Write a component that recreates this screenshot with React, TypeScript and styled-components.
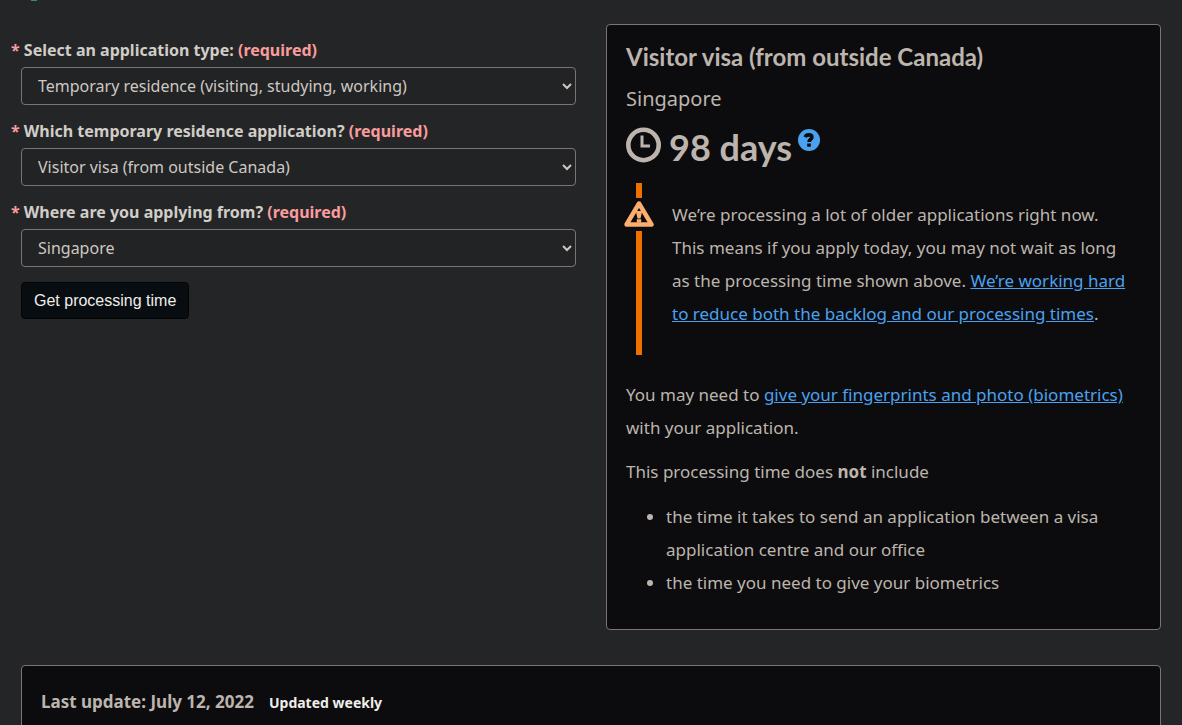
import React from "react";
import styled, { createGlobalStyle } from "styled-components";

const GlobalStyle = createGlobalStyle`
  * { box-sizing: border-box; }
  html { background: #242527; }
  body {
    margin: 0;
    background: #242527;
    color: #bdb5ad;
    font-family: "Noto Sans", sans-serif;
    font-size: 17px;
    line-height: 33px;
  }
`;

const Page = styled.div`
  padding: 0 21px;
  overflow: hidden;
`;

const TopMark = styled.div`
  width: 6px;
  height: 1px;
  margin-left: 10px;
  background: #3d8090;
`;

const Columns = styled.div`
  display: grid;
  grid-template-columns: minmax(0, 1fr) minmax(0, 1fr);
  gap: 30px;
  align-items: start;
  padding-top: 23px;
`;

const Form = styled.form`
  padding-top: 15px;
`;

const Field = styled.div`
  display: flex;
  flex-direction: column;
  gap: 5px;
  margin-bottom: 15px;
`;

const Label = styled.label`
  margin-left: -10px;
  color: #d1cdc7;
  font-size: 16px;
  font-weight: 700;
  line-height: 23px;
`;

const Required = styled.span`
  color: #fa9c9c;
`;

const Select = styled.select`
  width: 100%;
  height: 38px;
  padding: 0 1px 0 12px;
  border: 1px solid #7d7471;
  border-radius: 4px;
  background-color: #222325;
  color: #cdc8c2;
  font-family: inherit;
  font-size: 16px;
`;

const SubmitButton = styled.button`
  display: block;
  height: 37px;
  padding: 0 12px;
  border: 1px solid #020405;
  border-radius: 4px;
  background: #080d11;
  color: #f0eeea;
  font-family: "Liberation Sans", Arial, sans-serif;
  font-size: 16px;
`;

const Card = styled.section`
  border: 1px solid #7d7471;
  border-radius: 4px;
  background: #0c0c0e;
  padding: 0 19px;
`;

const ResultCard = styled(Card)`
  padding-top: 15px;
  padding-bottom: 30px;
`;

const Title = styled.h2`
  margin: 0;
  font-family: Lato, sans-serif;
  font-size: 24px;
  font-weight: 700;
  line-height: 33px;
`;

const Country = styled.p`
  margin: 9px 0 0;
  font-size: 20px;
  line-height: 33px;
`;

const Time = styled.p`
  display: flex;
  align-items: flex-start;
  margin: 8px 0 0;
  font-family: Lato, sans-serif;
  font-size: 36px;
  font-weight: 700;
  line-height: 48px;
`;

const ClockIcon = styled.svg`
  width: 36px;
  height: 36px;
  margin: 4px 7px 0 0;
`;

const HelpButton = styled.button`
  width: 22px;
  height: 22px;
  margin: 6px 0 0 6px;
  padding: 0;
  border: 0;
  background: none;
  line-height: 0;
`;

const Alert = styled.div`
  display: flex;
  gap: 17px;
  height: 172px;
  margin-top: 12px;
  margin-left: -3px;
`;

const AlertRail = styled.div`
  display: flex;
  flex: none;
  flex-direction: column;
  align-items: center;
  width: 32px;
`;

const RailBar = styled.span<{ $grow?: boolean }>`
  width: 6px;
  height: 15px;
  flex: ${(p) => (p.$grow ? "1" : "none")};
  background: #ee7100;
`;

const WarningIcon = styled.svg`
  width: 32px;
  height: 27px;
  margin: 3px 0;
`;

const AlertText = styled.p`
  max-width: 461px;
  margin: 0;
  padding-top: 15px;
`;

const Link = styled.a`
  color: #4ba1ee;
  text-decoration: underline;
`;

const Paragraph = styled.p<{ $gap: number }>`
  margin: ${(p) => p.$gap}px 0 0;
`;

const List = styled.ul`
  margin: 12px 0 0;
  padding-left: 40px;
`;

const UpdateCard = styled(Card)`
  display: flex;
  align-items: baseline;
  gap: 15px;
  margin-top: 35px;
  padding-top: 19px;
  padding-bottom: 19px;
`;

const Updated = styled.strong`
  font-size: 17px;
`;

const Frequency = styled.strong`
  color: #f0eeea;
  font-size: 14px;
`;

type SelectFieldProps = { id: string; label: string; value: string };

function SelectField({ id, label, value }: SelectFieldProps) {
  return (
    <Field>
      <Label htmlFor={id}>
        <Required>*</Required> {label} <Required>(required)</Required>
      </Label>
      <Select id={id} defaultValue={value}>
        <option>{value}</option>
      </Select>
    </Field>
  );
}

export default function App() {
  return (
    <>
      <GlobalStyle />
      <Page>
        <TopMark />
        <Columns>
          <Form onSubmit={(e) => e.preventDefault()}>
            <SelectField
              id="type"
              label="Select an application type:"
              value="Temporary residence (visiting, studying, working)"
            />
            <SelectField
              id="application"
              label="Which temporary residence application?"
              value="Visitor visa (from outside Canada)"
            />
            <SelectField id="country" label="Where are you applying from?" value="Singapore" />
            <SubmitButton type="submit">Get processing time</SubmitButton>
          </Form>
          <ResultCard>
            <Title>Visitor visa (from outside Canada)</Title>
            <Country>Singapore</Country>
            <Time>
              <ClockIcon viewBox="0 0 36 36" aria-hidden="true">
                <circle cx="17.5" cy="18" r="15.2" fill="none" stroke="#bdb5ad" strokeWidth="4.600" />
                <path d="M16 8.500v10.500H24" fill="none" stroke="#bdb5ad" strokeWidth="3" />
              </ClockIcon>
              98 days
              <HelpButton type="button" aria-label="Help">
                <svg width="22" height="22" viewBox="0 0 22 22" aria-hidden="true">
                  <circle cx="11" cy="11" r="11" fill="#4ba1ee" />
                  <path
                    d="M7.200 8.200C7.800 6.600 9.200 5.900 10.800 5.900C12.800 5.900 13.900 6.900 13.900 8.300C13.900 10.200 11 10.400 11 13"
                    fill="none"
                    stroke="#0c0c0e"
                    strokeWidth="3.600"
                  />
                  <path d="M9.200 14.400h3.600v3.400h-3.600z" fill="#0c0c0e" />
                </svg>
              </HelpButton>
            </Time>
            <Alert>
              <AlertRail>
                <RailBar />
                <WarningIcon viewBox="0 0 32 27" aria-hidden="true">
                  <path
                    d="M16 2.500L28.500 23.500H3.500z"
                    fill="none"
                    stroke="#fcae6e"
                    strokeWidth="4.400"
                    strokeLinejoin="round"
                  />
                  <path d="M12.800 10h6.400l-1.700 7.500h-3zM13.800 18.300h4.400v3.200h-4.400z" fill="#fcae6e" />
                </WarningIcon>
                <RailBar $grow />
              </AlertRail>
              <AlertText>
                We’re processing a lot of older applications right now. This means if you apply
                today, you may not wait as long as the processing time shown above.{" "}
                <Link href="#backlog">
                  We’re working hard to reduce both the backlog and our processing times
                </Link>
                .
              </AlertText>
            </Alert>
            <Paragraph $gap={23}>
              You may need to{" "}
              <Link href="#biometrics">give your fingerprints and photo (biometrics)</Link> with
              your application.
            </Paragraph>
            <Paragraph $gap={11}>
              This processing time does <strong>not</strong> include
            </Paragraph>
            <List>
              <li>the time it takes to send an application between a visa application centre and our office</li>
              <li>the time you need to give your biometrics</li>
            </List>
          </ResultCard>
        </Columns>
        <UpdateCard>
          <Updated>Last update: July 12, 2022</Updated>
          <Frequency>Updated weekly</Frequency>
        </UpdateCard>
      </Page>
    </>
  );
}
